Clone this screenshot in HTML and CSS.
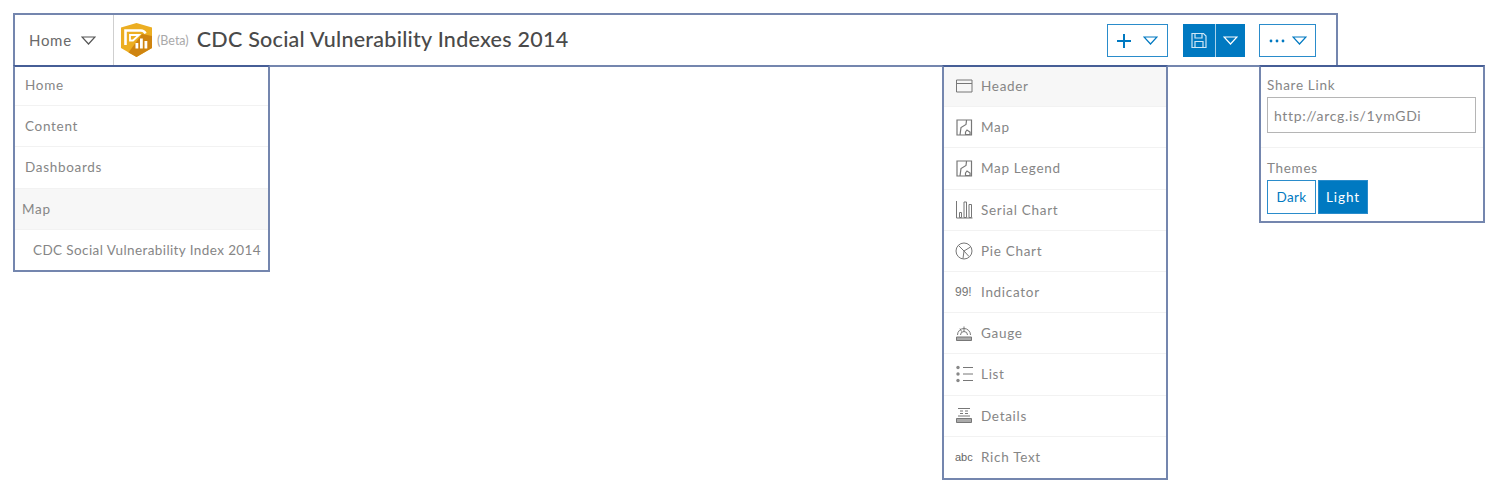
FILE: index.html
```html
<!DOCTYPE html>
<html lang="en">
<head>
    <meta charset="UTF-8">
    <title>CDC Social Vulnerability Indexes 2014</title>
    <link rel="stylesheet" href="styles.css">
</head>
<body>
    <!-- Header bar -->
    <header class="topbar">
        <div class="home-toggle">
            <span>Home</span>
            <svg width="15" height="9" viewBox="0 0 15 9"><path d="M1 1h13L7.500 8z" fill="none" stroke="#555" stroke-width="1.200"/></svg>
        </div>
        <div class="title-area">
            <svg class="app-logo" width="31" height="34" viewBox="0 0 31 34">
                <path d="M15.500 0L31 4.500V25l-15.500 9L0 25V4.500z" fill="#ecae22"/>
                <path d="M31 13v12l-15.500 9-8-4.500L21 11z" fill="#cf8410"/>
                <path d="M4.500 22V7.500h15.500q3 0 4.500 3" fill="none" stroke="#fff" stroke-width="2.600"/>
                <path d="M9 17.500v-5.500h9l-6 5.500z" fill="none" stroke="#fff" stroke-width="1.800"/>
                <path d="M14.500 25.500v-5.500h2.800v5.500zM19 25.500v-10h2.800v10zM23.500 25.500v-7.500h2.800v7.500z" fill="#fff"/>
            </svg>
            <span class="beta">(Beta)</span>
            <h1>CDC Social Vulnerability Indexes 2014</h1>
        </div>
        <div class="actions">
            <button class="btn btn-add" type="button">
                <svg width="14" height="14" viewBox="0 0 14 14"><path d="M7 0v14M0 7h14" stroke="#0079c1" stroke-width="2"/></svg>
                <svg width="15" height="9" viewBox="0 0 15 9"><path d="M1 1h13L7.500 8z" fill="none" stroke="#0079c1" stroke-width="1.200"/></svg>
            </button>
            <div class="btn-save">
                <span class="save-part">
                    <svg width="16" height="17" viewBox="0 0 16 17"><path d="M1 1.500h11.500L15 4v11.500H1zM4 1.500v4.500h7V1.500M4 15.500V9.500h8v6" fill="none" stroke="#cfe6f5" stroke-width="1.200"/></svg>
                </span>
                <span class="save-caret">
                    <svg width="15" height="9" viewBox="0 0 15 9"><path d="M1 1h13L7.500 8z" fill="none" stroke="#fff" stroke-width="1.200"/></svg>
                </span>
            </div>
            <button class="btn btn-more" type="button">
                <svg width="16" height="4" viewBox="0 0 16 4"><circle cx="2" cy="2" r="1.400" fill="#0079c1"/><circle cx="8" cy="2" r="1.400" fill="#0079c1"/><circle cx="14" cy="2" r="1.400" fill="#0079c1"/></svg>
                <svg width="15" height="9" viewBox="0 0 15 9"><path d="M1 1h13L7.500 8z" fill="none" stroke="#0079c1" stroke-width="1.200"/></svg>
            </button>
        </div>
    </header>

    <!-- Open dropdown menus -->
    <div class="menus">
        <ul class="menu menu-nav">
            <li>Home</li>
            <li>Content</li>
            <li>Dashboards</li>
            <li class="group">Map</li>
            <li class="child">CDC Social Vulnerability Index 2014</li>
        </ul>

        <ul class="menu menu-add">
            <li class="active">
                <svg class="item-icon" width="18" height="14" viewBox="0 0 18 14"><path d="M1.500 1h15.500v12H1.500zM1.500 4.500h15.500" fill="none" stroke="#777"/></svg>
                Header
            </li>
            <li>
                <svg class="item-icon" width="18" height="17" viewBox="0 0 18 17"><path d="M2 1h14.500v15H2zM11.500 1.500l-.5 4-5 3-1 7.500M10.500 13l1.500-2 3 2v2.500h-4.500z" fill="none" stroke="#777" stroke-width="1.200"/></svg>
                Map
            </li>
            <li>
                <svg class="item-icon" width="18" height="17" viewBox="0 0 18 17"><path d="M2 1h14.500v15H2zM11.500 1.500l-.5 4-5 3-1 7.500M10.500 13l1.500-2 3 2v2.500h-4.500z" fill="none" stroke="#777" stroke-width="1.200"/></svg>
                Map Legend
            </li>
            <li>
                <svg class="item-icon" width="18" height="19" viewBox="0 0 18 19"><path d="M1.500 1v17h16M4.500 12.500h2v5h-2zM9 2h2.500v15.500H9zM14 4.500h2.500v13H14z" fill="none" stroke="#777"/></svg>
                Serial Chart
            </li>
            <li>
                <svg class="item-icon" width="18" height="18" viewBox="0 0 18 18"><circle cx="9" cy="9" r="8" fill="none" stroke="#777"/><path d="M3.500 3.500L9 9l6.500-4M9 9l-1 7.500M9 9l5 5.500" fill="none" stroke="#777"/></svg>
                Pie Chart
            </li>
            <li>
                <span class="item-icon glyph glyph-num">99!</span>
                Indicator
            </li>
            <li>
                <svg class="item-icon" width="18" height="17" viewBox="0 0 18 17"><path d="M2.500 10a6.500 6.500 0 0 1 13 0M5.500 10a3.500 3.500 0 0 1 7 0M9 1.500v5M5 3.500l1.500 3" fill="none" stroke="#777"/><path d="M1.500 12h15v3.500h-15z" fill="#aaa" stroke="#777"/></svg>
                Gauge
            </li>
            <li>
                <svg class="item-icon" width="18" height="18" viewBox="0 0 18 18"><circle cx="3" cy="2.500" r="1.700" fill="#888"/><circle cx="3" cy="9" r="1.700" fill="#888"/><circle cx="3" cy="15.500" r="1.700" fill="#888"/><path d="M8 2.500h10M8 9h10M8 15.500h10" stroke="#777"/></svg>
                List
            </li>
            <li>
                <svg class="item-icon" width="18" height="17" viewBox="0 0 18 17"><path d="M3 1.500h12M5 4h3M10 4h3M5 6.500h3M10 6.500h3M3 9h12" stroke="#777"/><path d="M1.500 11.500h15v4h-15z" fill="#aaa" stroke="#777"/></svg>
                Details
            </li>
            <li>
                <span class="item-icon glyph">abc</span>
                Rich Text
            </li>
        </ul>

        <div class="menu menu-share">
            <div class="share-section">
                <label for="share-link">Share Link</label>
                <input id="share-link" type="text" value="http://arcg.is/1ymGDi">
            </div>
            <div class="theme-section">
                <div class="theme-label">Themes</div>
                <div class="theme-buttons">
                    <button class="theme-btn" type="button">Dark</button>
                    <button class="theme-btn selected" type="button">Light</button>
                </div>
            </div>
        </div>
    </div>
</body>
</html>
```

FILE: styles.css
```css
/* Basic Reset */
* {
    margin: 0;
    padding: 0;
    box-sizing: border-box;
}

body {
    font-family: 'Lato', 'Open Sans', sans-serif;
    font-size: 14px;
    color: #868686;
    background-color: #fff;
    padding: 13px 0 0 13px;
    letter-spacing: 0.7px;
}

ul {
    list-style: none;
}

/* Header bar */
.topbar {
    display: flex;
    width: 1325px;
    height: 54px;
    border: 2px solid #7486ae;
    align-items: stretch;
}

.home-toggle {
    width: 99px;
    display: flex;
    align-items: center;
    gap: 9px;
    padding-left: 14px;
    border-right: 1px solid #cfcfcf;
    color: #6a6a6a;
    font-size: 15px;
}

.title-area {
    display: flex;
    align-items: center;
    padding-left: 7px;
    flex: 1;
}

.app-logo {
    flex: none;
}

.beta {
    font-size: 12.500px;
    color: #a9a9a9;
    margin-left: 5px;
    letter-spacing: 0;
}

h1 {
    font-size: 21.500px;
    font-weight: 500;
    color: #4a4a4a;
    margin-left: 8px;
    padding-bottom: 2px;
    letter-spacing: 0.26px;
}

.actions {
    display: flex;
    align-items: center;
    margin-right: 20px;
    padding-top: 1px;
}

.btn {
    display: flex;
    align-items: center;
    justify-content: center;
    height: 33px;
    background-color: #fff;
    border: 1px solid #2a8ccb;
}

.btn-add {
    width: 61px;
    gap: 12px;
}

.btn-more {
    width: 57px;
    gap: 7px;
    margin-left: 14px;
}

.btn-save {
    display: flex;
    width: 62px;
    height: 33px;
    margin-left: 15px;
    background-color: #0079c1;
}

.save-part {
    width: 33px;
    display: flex;
    align-items: center;
    justify-content: center;
    border-right: 1px solid #a9d2ea;
}

.save-caret {
    flex: 1;
    display: flex;
    align-items: center;
    justify-content: center;
}

/* Dropdown menus */
.menus {
    display: flex;
    align-items: flex-start;
    margin-top: -2px;
}

.menu {
    border: 2px solid #7486ae;
    border-top-color: #465e96;
    background-color: #fff;
    font-size: 13.500px;
}

.menu-nav {
    width: 257px;
}

.menu-add {
    width: 226px;
    margin-left: 672px;
}

.menu-share {
    width: 226px;
    margin-left: 91px;
}

.menu li {
    display: flex;
    align-items: center;
    height: 41.200px;
    padding-left: 10px;
    border-bottom: 1px solid #f2f2f2;
}

.menu li:last-child {
    border-bottom: none;
}

.menu-nav li:first-child {
    height: 39.200px;
    padding-bottom: 2px;
}

.menu-nav li:last-child {
    height: 40.200px;
}

.menu-nav .group {
    background-color: #f7f7f7;
    padding-left: 7px;
}

.menu-nav .child {
    padding-left: 18px;
    white-space: nowrap;
    letter-spacing: 0.4px;
}

.menu-add li {
    gap: 8px;
    padding-left: 11px;
}

.menu-add li:first-child {
    height: 40.200px;
    padding-bottom: 2px;
}

.menu-add .active {
    background-color: #f7f7f7;
}

.item-icon {
    width: 18px;
    flex: none;
}

.glyph {
    font-family: 'Liberation Sans', sans-serif;
    font-size: 11px;
    letter-spacing: 0;
    color: #666;
    white-space: nowrap;
}

.glyph-num {
    font-size: 12px;
    color: #777;
}

/* Share panel */
.share-section {
    padding: 10px 6px 14px;
    border-bottom: 1px solid #f2f2f2;
}

.share-section label {
    display: block;
    line-height: 17px;
    margin-bottom: 3px;
}

.share-section input {
    display: block;
    width: 209px;
    height: 36px;
    padding: 0 6px;
    border: 1px solid #b5b5b5;
    font-family: inherit;
    font-size: 14px;
    letter-spacing: 0.65px;
    color: #868686;
}

.theme-section {
    padding: 12px 6px 7px;
}

.theme-label {
    line-height: 17px;
    margin-bottom: 3px;
}

.theme-buttons {
    display: flex;
    gap: 2px;
}

.theme-btn {
    height: 34px;
    width: 49px;
    border: 1px solid #2a8ccb;
    background-color: #fff;
    color: #0079c1;
    font-family: inherit;
    font-size: 13.500px;
    letter-spacing: 0.3px;
}

.theme-btn.selected {
    width: 50px;
    background-color: #0079c1;
    color: #fff;
    letter-spacing: 0.9px;
}
```
